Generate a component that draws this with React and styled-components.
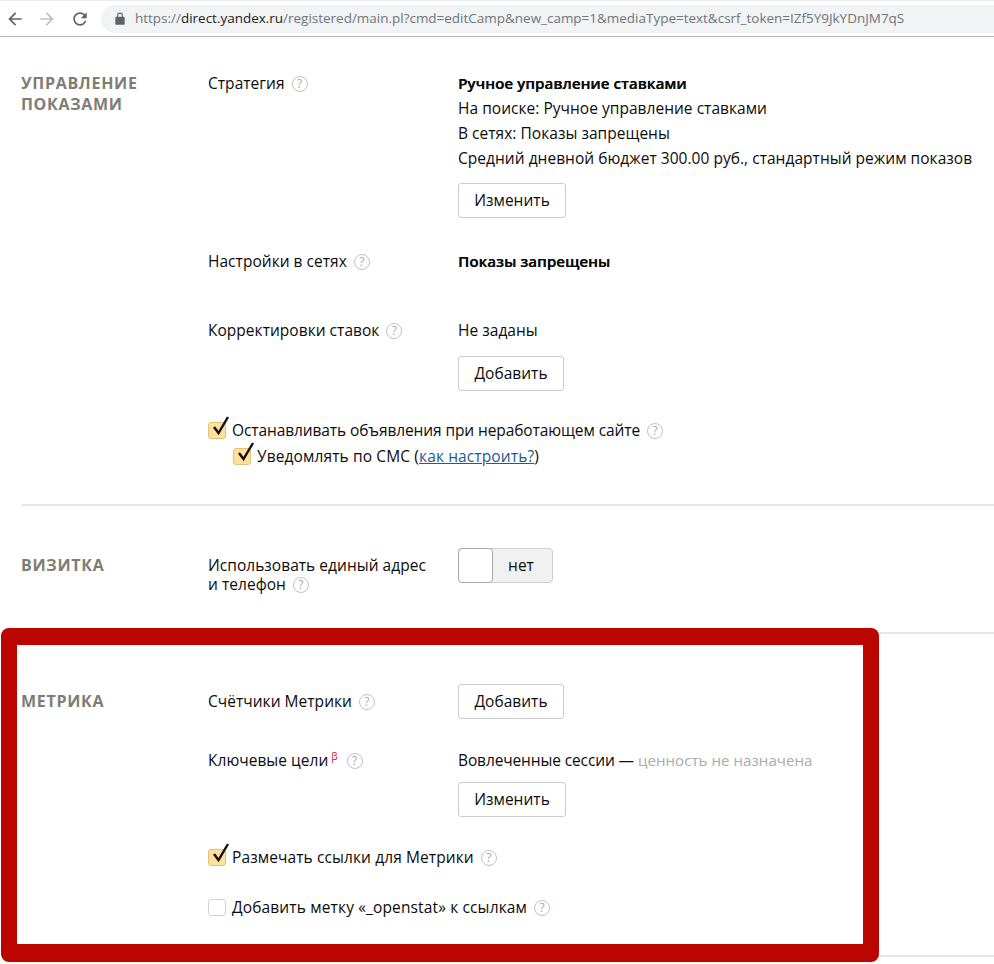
import React from 'react';
import styled, { createGlobalStyle } from 'styled-components';

const Global = createGlobalStyle`
  html, body {
    margin: 0;
    padding: 0;
    background: #fff;
  }
  body {
    font-family: "Open Sans", "Liberation Sans", sans-serif;
    font-size: 15.5px;
    letter-spacing: 0.03px;
    line-height: 25px;
    color: #0c0c0c;
  }
`;

const Page = styled.div`
  position: relative;
  width: 994px;
  height: 964px;
  overflow: hidden;
`;

const Toolbar = styled.div`
  display: flex;
  align-items: center;
  height: 37px;
  box-sizing: border-box;
  padding: 4px 0 4px 5px;
  border-bottom: 1px solid #b9b9b9;
  border-top: 1px solid #ececec;
`;

const NavButton = styled.svg`
  width: 20px;
  height: 20px;
  flex: none;
  margin-right: ${(p) => p.$gap}px;
  fill: ${(p) => p.$color};
  transform: ${(p) => (p.$flip ? 'scaleX(-1)' : 'none')};
`;

const AddressBar = styled.div`
  flex: 1;
  height: 28px;
  display: flex;
  align-items: center;
  margin-left: -4px;
  padding-left: 12px;
  background: #f1f3f4;
  border-radius: 14px 0 0 14px;
  font-size: 13.47px;
  letter-spacing: 0;
  white-space: nowrap;
  color: #70757a;
`;

const Lock = styled.svg`
  width: 14px;
  height: 14px;
  fill: #5f6368;
  margin-right: 8px;
`;

const Host = styled.span`
  color: #202124;
`;

const Section = styled.section`
  display: grid;
  grid-template-columns: 187px 1fr;
  margin-left: 21px;
  padding: ${(p) => p.$top}px 0 ${(p) => p.$bottom}px;
  border-bottom: 2px solid #e6e6e6;
`;

const SectionTitle = styled.h2`
  margin: ${(p) => p.$top}px 0 0;
  font-size: 16px;
  line-height: 21px;
  font-weight: 700;
  letter-spacing: 0.7px;
  text-transform: uppercase;
  color: #7d7d76;
`;

const Row = styled.div`
  display: grid;
  grid-template-columns: 250px 1fr;
  margin-top: ${(p) => p.$top || 0}px;
`;

const FieldName = styled.div`
  padding-top: ${(p) => p.$top || 0}px;
  line-height: ${(p) => p.$line || 25}px;
`;

const Strong = styled.div`
  font-size: 15.2px;
  font-weight: 600;
  text-shadow: 0.2px 0 0 currentColor;
`;

const Tracked = styled.span`
  letter-spacing: ${(p) => p.$track}px;
`;

const Muted = styled.span`
  font-size: 15.1px;
  color: #ababab;
`;

const Beta = styled.sup`
  font-size: 10px;
  line-height: 0;
  color: #d0142c;
  margin-left: 3px;
  vertical-align: 6px;
`;

const Help = styled.span`
  display: inline-block;
  width: 16px;
  height: 16px;
  box-sizing: border-box;
  margin: -4px 0 -4px ${(p) => p.$left || 7}px;
  border: 1.5px solid #c2c2c2;
  border-radius: 50%;
  font-size: 12px;
  line-height: 13px;
  text-align: center;
  color: #a9a9a9;
  vertical-align: 1px;
`;

const Button = styled.button`
  display: block;
  height: 35px;
  width: ${(p) => p.$width}px;
  margin-top: ${(p) => p.$top || 0}px;
  padding: 0;
  background: #fff;
  border: 1px solid #cbcbcb;
  border-radius: 3px;
  font: inherit;
  letter-spacing: inherit;
  color: #0c0c0c;
`;

const Toggle = styled.div`
  display: flex;
  width: 95px;
  height: 35px;
  box-sizing: border-box;
  border: 1px solid #cfcfcf;
  border-radius: 4px;
  background: #f1f1f1;
`;

const ToggleThumb = styled.div`
  width: 35px;
  box-sizing: border-box;
  margin: -1px 0 -1px -1px;
  background: #fff;
  border: 1px solid #a9a9a9;
  border-radius: 4px;
`;

const ToggleLabel = styled.div`
  flex: 1;
  padding-right: 3px;
  text-align: center;
  line-height: 33px;
`;

const CheckRow = styled.div`
  display: flex;
  align-items: center;
  height: 25px;
  margin-top: ${(p) => p.$top || 0}px;
  margin-left: ${(p) => p.$indent || 0}px;
`;

const Box = styled.span`
  position: relative;
  flex: none;
  width: 18px;
  height: 17px;
  box-sizing: border-box;
  margin-right: 6px;
  border: 1px solid ${(p) => (p.$checked ? '#e0c27c' : '#d2d2d2')};
  border-radius: 3px;
  background: ${(p) => (p.$checked ? '#ffe09a' : '#fff')};
`;

const Tick = styled.svg`
  position: absolute;
  left: 2px;
  top: -8px;
  width: 20px;
  height: 22px;
  fill: none;
  stroke: #111;
  stroke-width: 2.4;
`;

const HelpLink = styled.a`
  color: #1a5a9e;
  text-decoration: underline;
`;

const Annotation = styled.div`
  position: absolute;
  left: 1px;
  top: 628px;
  width: 878px;
  height: 334px;
  box-sizing: border-box;
  border: 16px solid #bb0500;
  border-top-width: 17px;
  border-bottom-width: 18px;
  border-radius: 8px;
  pointer-events: none;
`;

const arrow = 'M20 11H7.83l5.59-5.59L12 4l-8 8 8 8 1.41-1.41L7.83 13H20v-2z';

function Check({ checked, indent, top, track, children }) {
  return (
    <CheckRow $indent={indent} $top={top}>
      <Box $checked={checked}>
        {checked && (
          <Tick viewBox="0 0 20 22">
            <path d="M3 12l4.5 6L17 2" />
          </Tick>
        )}
      </Box>
      <Tracked $track={track}>{children}</Tracked>
    </CheckRow>
  );
}

export default function App() {
  return (
    <Page>
      <Global />
      <Toolbar>
        <NavButton viewBox="0 0 24 24" $gap={12} $color="#5f6368">
          <path d={arrow} />
        </NavButton>
        <NavButton viewBox="0 0 24 24" $gap={13} $color="#bdc1c6" $flip>
          <path d={arrow} />
        </NavButton>
        <NavButton viewBox="0 0 24 24" $gap={15} $color="#5f6368">
          <path d="M17.65 6.35C16.2 4.9 14.21 4 12 4c-4.42 0-7.99 3.58-7.99 8s3.57 8 7.99 8c3.73 0 6.84-2.55 7.73-6h-2.08c-.82 2.33-3.04 4-5.65 4-3.31 0-6-2.69-6-6s2.69-6 6-6c1.66 0 3.14.69 4.22 1.78L13 11h7V4l-2.35 2.35z" />
        </NavButton>
        <AddressBar>
          <Lock viewBox="0 0 24 24">
            <path d="M18 8h-1V6c0-2.76-2.24-5-5-5S7 3.24 7 6v2H6c-1.1 0-2 .9-2 2v10c0 1.1.9 2 2 2h12c1.1 0 2-.9 2-2V10c0-1.1-.9-2-2-2zM9 6c0-1.66 1.34-3 3-3s3 1.34 3 3v2H9V6z" />
          </Lock>
          <span>
            https://<Host>direct.yandex.ru</Host>/registered/main.pl?cmd=editCamp&amp;new_camp=1&amp;mediaType=text&amp;csrf_token=IZf5Y9JkYDnJM7qS
          </span>
        </AddressBar>
      </Toolbar>

      <Section $top={34} $bottom={35}>
        <SectionTitle $top={2}>Управление показами</SectionTitle>
        <div>
          <Row>
            <FieldName>Стратегия<Help>?</Help></FieldName>
            <div>
              <Strong>Ручное управление ставками</Strong>
              <div>На поиске: Ручное управление ставками</div>
              <div>В сетях: Показы запрещены</div>
              <div>Средний дневной бюджет 300.00 руб., стандартный режим показов</div>
              <Button $width={108} $top={12}>Изменить</Button>
            </div>
          </Row>
          <Row $top={31}>
            <FieldName>Настройки в сетях<Help>?</Help></FieldName>
            <Strong>Показы запрещены</Strong>
          </Row>
          <Row $top={44}>
            <FieldName>Корректировки ставок<Help>?</Help></FieldName>
            <div>
              <div>Не заданы</div>
              <Button $width={106} $top={13}>Добавить</Button>
            </div>
          </Row>
          <Check checked top={27} track={-0.1}>
            Останавливать объявления при неработающем сайте<Help>?</Help>
          </Check>
          <Check checked indent={25} top={1} track={0.12}>
            Уведомлять по СМС (<HelpLink>как настроить?</HelpLink>)
          </Check>
        </div>
      </Section>

      <Section $top={42} $bottom={38}>
        <SectionTitle $top={7}>Визитка</SectionTitle>
        <Row>
          <FieldName $top={8} $line={19}>
            Использовать единый адрес<br />и телефон<Help>?</Help>
          </FieldName>
          <Toggle>
            <ToggleThumb />
            <ToggleLabel>нет</ToggleLabel>
          </Toggle>
        </Row>
      </Section>

      <Section $top={50} $bottom={35}>
        <SectionTitle $top={7}>Метрика</SectionTitle>
        <div>
          <Row>
            <FieldName $top={5}>Счётчики Метрики<Help>?</Help></FieldName>
            <Button $width={106}>Добавить</Button>
          </Row>
          <Row $top={29}>
            <FieldName>Ключевые цели<Beta>β</Beta><Help $left={9}>?</Help></FieldName>
            <div>
              <Tracked $track={-0.12}>Вовлеченные сессии — </Tracked><Muted>ценность не назначена</Muted>
              <Button $width={108} $top={9}>Изменить</Button>
            </div>
          </Row>
          <Check checked top={28} track={0.1}>
            Размечать ссылки для Метрики<Help>?</Help>
          </Check>
          <Check top={25} track={0.14}>
            Добавить метку «_openstat» к ссылкам<Help>?</Help>
          </Check>
        </div>
      </Section>

      <Annotation />
    </Page>
  );
}
